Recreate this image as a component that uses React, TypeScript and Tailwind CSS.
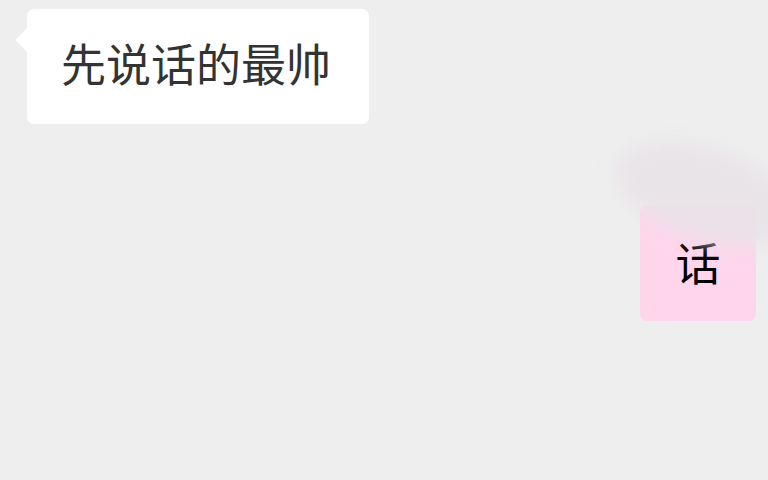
import React from 'react';

export default function App() {
  return (
    <div
      className="relative h-[480px] w-[768px] overflow-hidden bg-[#eeeeee]"
      style={{ fontFamily: '"Noto Sans CJK SC", "Noto Sans", sans-serif' }}
    >
      <div className="flex flex-col pt-[9px]">
        {/* 左侧消息 */}
        <div className="relative ml-[27px] self-start">
          <div className="absolute left-[-8px] top-[22px] h-[18px] w-[18px] rotate-45 bg-white" />
          <div className="relative flex h-[115px] w-[342px] items-center rounded-[7px] bg-white pb-[8px] pl-[34px]">
            <span className="text-[45px] leading-none text-[#333333]">先说话的最帅</span>
          </div>
        </div>

        {/* 右侧消息 */}
        <div className="relative mr-[12px] mt-[81px] self-end">
          <div className="flex h-[116px] w-[116px] items-center justify-center rounded-[7px] bg-[#ffd5eb] pb-[4px]">
            <span className="text-[45px] leading-none text-black">话</span>
          </div>
          <div className="pointer-events-none absolute left-[-28px] top-[-56px] h-[92px] w-[190px] rotate-[18deg] rounded-[50%] bg-[#e9e3e8] opacity-90 blur-[9px]" />
        </div>
      </div>
    </div>
  );
}
